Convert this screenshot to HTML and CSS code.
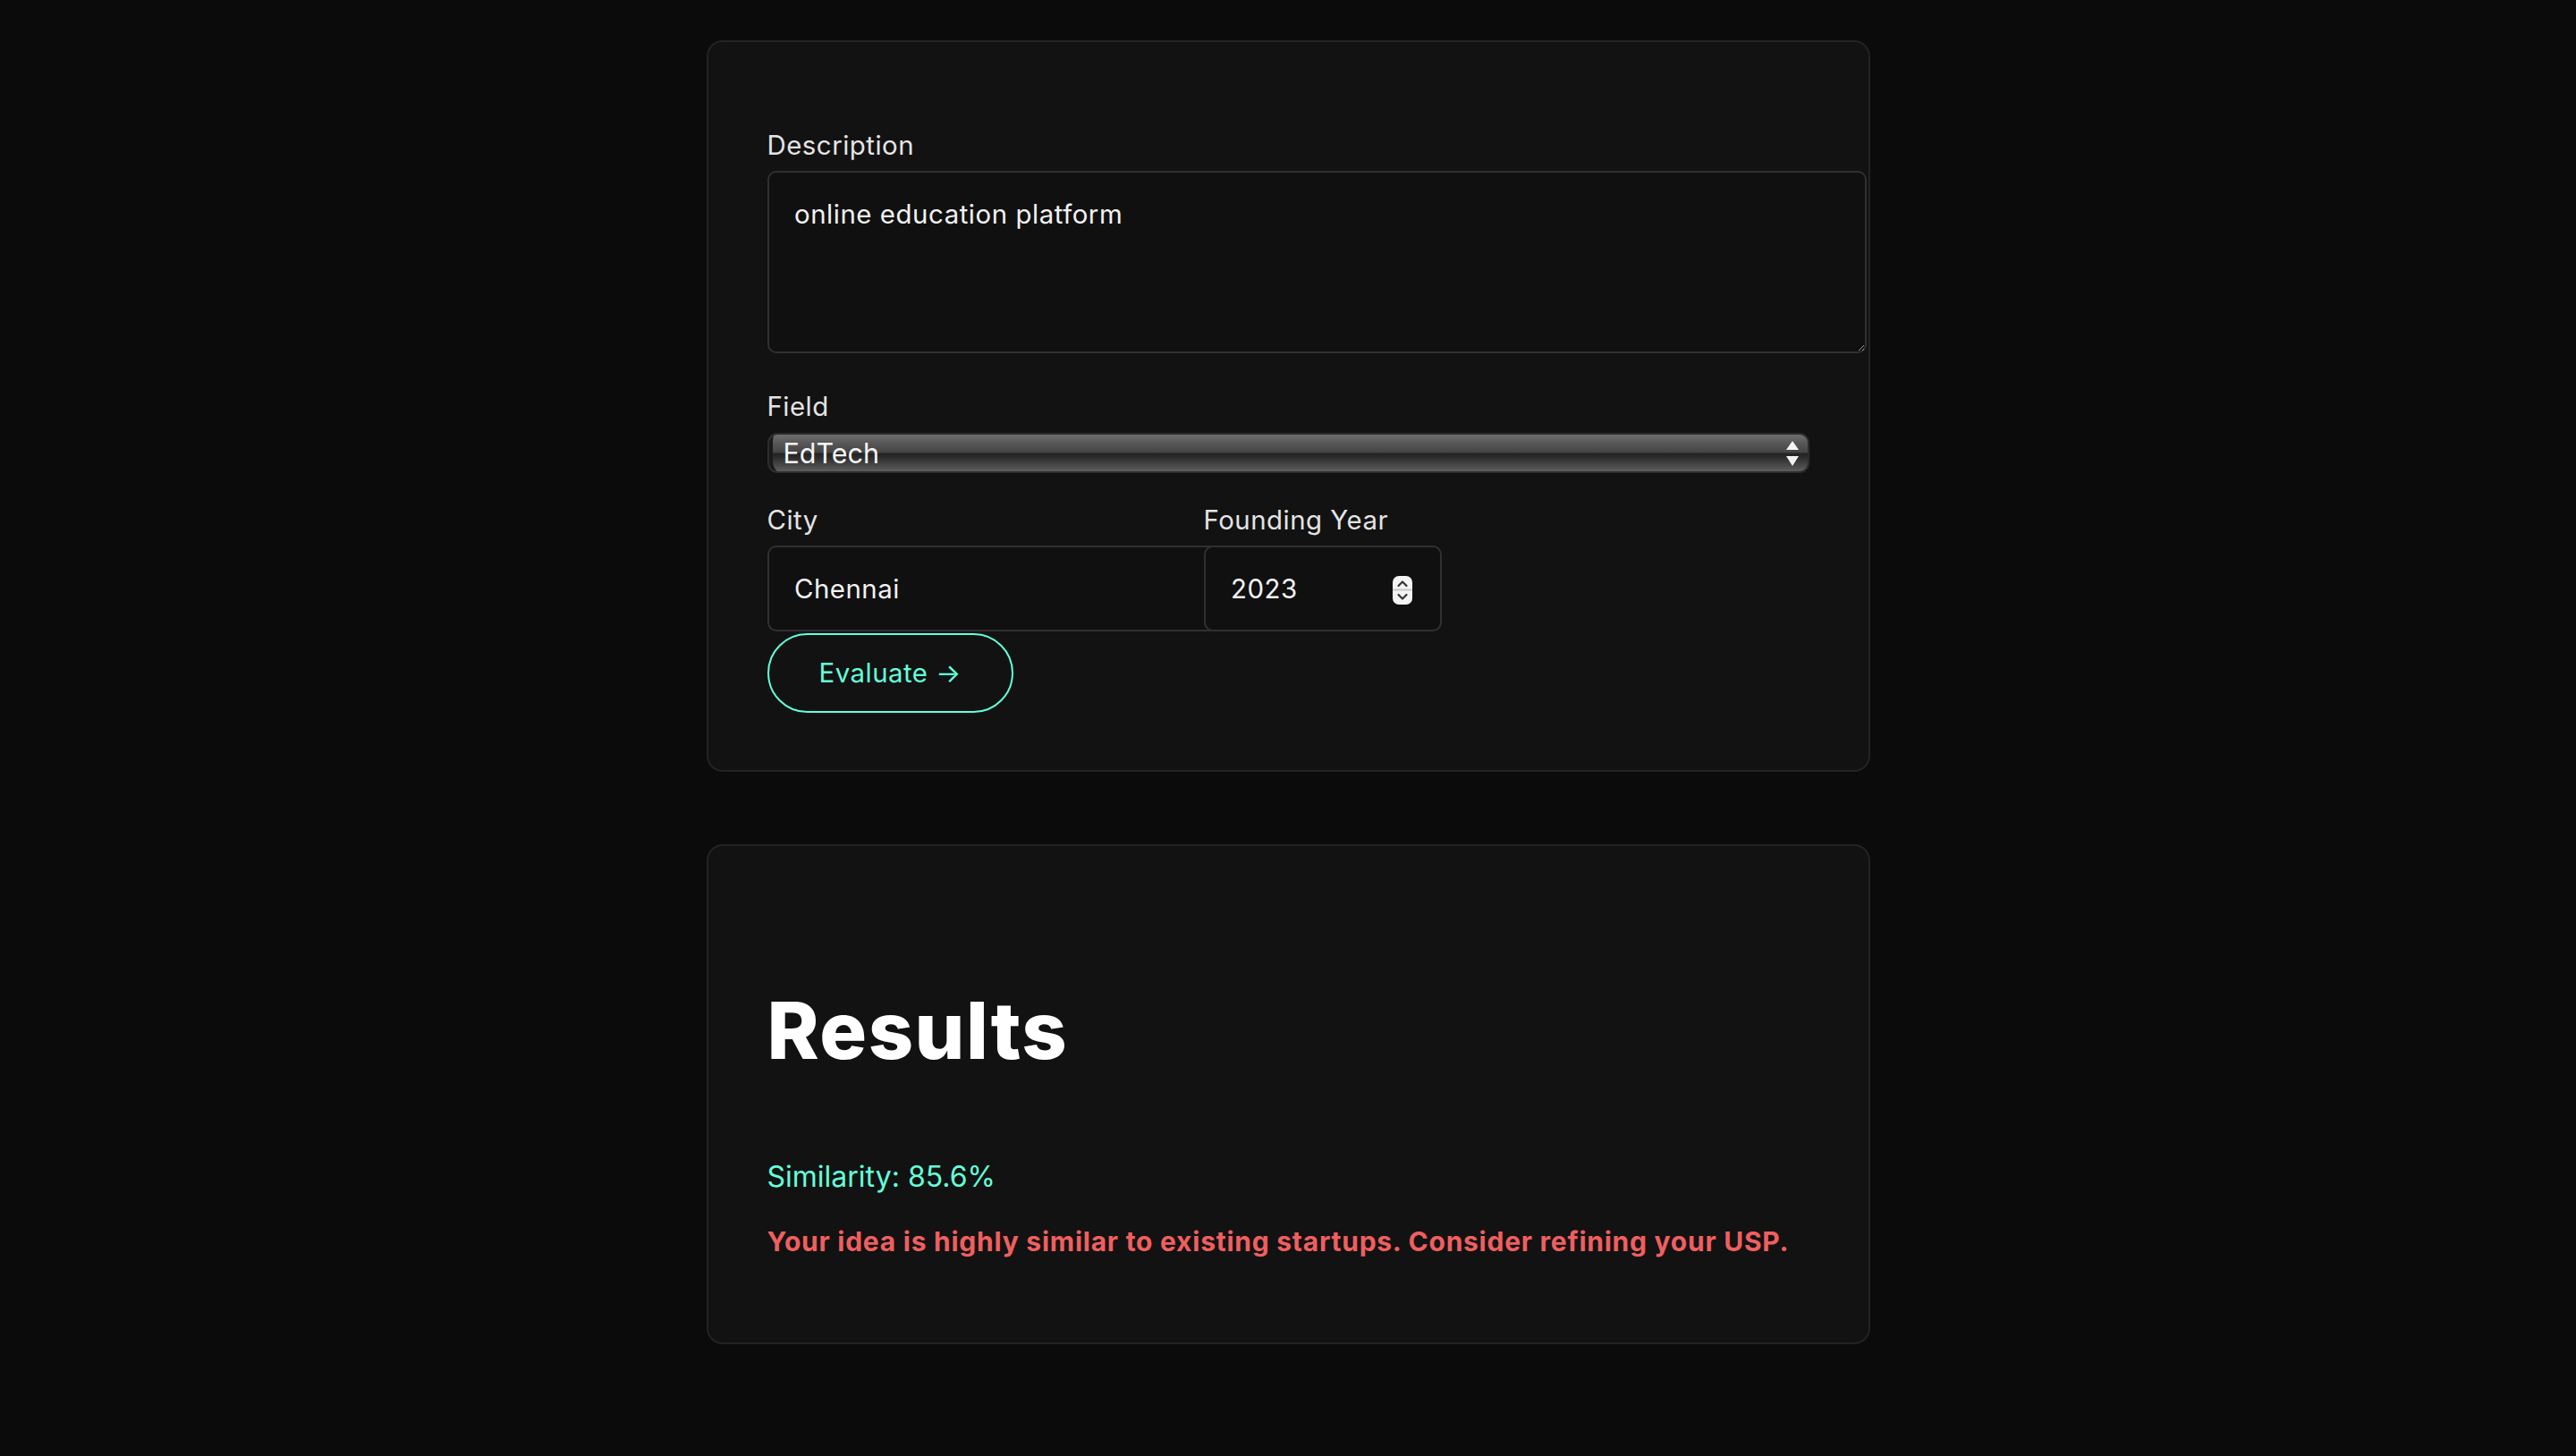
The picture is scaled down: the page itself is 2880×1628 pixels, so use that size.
FILE: index.html
```html
<!DOCTYPE html>
<html lang="en">
<head>
<meta charset="utf-8">
<title>Startup Idea Evaluator</title>
<link rel="stylesheet" href="styles.css">
</head>
<body>
<main class="page">
  <section class="card form-card">
    <form class="form">
      <div class="group group-desc">
        <label class="label" for="desc">Description</label>
        <textarea id="desc" class="textarea">online education platform</textarea>
      </div>
      <div class="group group-field">
        <label class="label" for="field">Field</label>
        <div class="select-wrap">
          <select id="field" class="select"><option>EdTech</option></select>
          <svg class="select-arrows" width="18" height="45" viewBox="0 0 18 45" aria-hidden="true">
            <polygon points="2,19 16,19 9,9" fill="#f4f4f4"/>
            <polygon points="2,26 16,26 9,37" fill="#f4f4f4"/>
          </svg>
        </div>
      </div>
      <div class="row">
        <div class="col col-city">
          <label class="label" for="city">City</label>
          <input id="city" class="input" type="text" value="Chennai">
        </div>
        <div class="col col-year">
          <label class="label" for="year">Founding Year</label>
          <div class="num-wrap">
            <input id="year" class="input input-year" type="number" value="2023">
            <svg class="spinner" width="22" height="32" viewBox="0 0 22 32" aria-hidden="true">
              <rect x="0" y="0" width="22" height="32" rx="7" fill="#f4f4f4"/>
              <line x1="0" y1="15.5" x2="22" y2="15.5" stroke="#c9c9c9" stroke-width="2"/>
              <polyline points="6.5,11 11,6.5 15.5,11" fill="none" stroke="#333" stroke-width="2.2" stroke-linecap="round" stroke-linejoin="round"/>
              <polyline points="6.5,21 11,25.5 15.5,21" fill="none" stroke="#333" stroke-width="2.2" stroke-linecap="round" stroke-linejoin="round"/>
            </svg>
          </div>
        </div>
      </div>
      <button type="button" class="btn">Evaluate →</button>
    </form>
  </section>

  <section class="card results-card">
    <h2 class="results-title">Results</h2>
    <p class="similarity">Similarity: 85.6%</p>
    <p class="warning">Your idea is highly similar to existing startups. Consider refining your USP.</p>
  </section>
</main>
</body>
</html>
```

FILE: styles.css
```css
* {
  box-sizing: border-box;
}

html, body {
  margin: 0;
  background: #0b0b0b;
}

body {
  font-family: Inter, "Noto Sans", "Liberation Sans", sans-serif;
  color: #e8e8e8;
  padding-top: 45px;
  min-height: 1628px;
}

.page {
  display: flex;
  flex-direction: column;
  align-items: center;
  gap: 81px;
}

.card {
  width: 1301px;
  background: #121212;
  border: 2px solid #232323;
  border-radius: 18px;
}

.form-card {
  padding: 98px 66px 64px 66px;
}

.form {
  display: flex;
  flex-direction: column;
  align-items: flex-start;
  margin: 0;
}

.group {
  width: 100%;
}

.label {
  display: block;
  white-space: nowrap;
  font-size: 29.4px;
  line-height: 36px;
  letter-spacing: 0.5px;
  color: #e4e4e4;
  margin-bottom: 10px;
}

.textarea {
  display: block;
  box-sizing: content-box;
  width: calc(100% + 3px);
  height: 143px;
  padding: 28.5px;
  margin: 0 0 42px 0;
  border: 2px solid #303030;
  border-radius: 10px;
  background: #101010;
  color: #f2f2f2;
  font-family: Inter, "Noto Sans", sans-serif;
  font-size: 29.4px;
  line-height: 36px;
  letter-spacing: 0.55px;
  color-scheme: dark;
  outline: none;
}

.group-field .label {
  margin-bottom: 11px;
}

.group-field {
  margin-bottom: 35px;
}

.select-wrap {
  position: relative;
  width: 100%;
  height: 45px;
}

.select {
  -webkit-appearance: none;
  appearance: none;
  display: block;
  width: 100%;
  height: 45px;
  margin: 0;
  padding: 0 40px 0 16px;
  border: 2px solid #2c2c2c;
  border-radius: 11px;
  background: linear-gradient(to bottom, #6f6f6f 0%, #585858 22%, #454545 48%, #232323 52%, #2c2c2c 62%, #4a4a4a 85%, #5e5e5e 100%);
  box-shadow: inset 10px -2px 0 -6px #1a1a1a;
  color: #f4f4f4;
  font-family: Inter, "Noto Sans", sans-serif;
  font-size: 30.5px;
  line-height: 41px;
  outline: none;
}

.select-arrows {
  position: absolute;
  left: 1137px;
  top: 0;
}

.row {
  display: flex;
  align-items: flex-start;
}

.col-city {
  width: 488px;
}

.col-year {
  width: 205px;
}

.input {
  display: block;
  box-sizing: content-box;
  width: 100%;
  height: 35px;
  margin: 0;
  padding: 28.5px;
  border: 2px solid #303030;
  border-radius: 10px;
  background: #101010;
  color: #f2f2f2;
  font-family: Inter, "Noto Sans", sans-serif;
  font-size: 29.4px;
  line-height: 35px;
  letter-spacing: 0.5px;
  outline: none;
}

.num-wrap {
  position: relative;
  width: 100%;
}

.input-year {
  -moz-appearance: textfield;
}

.input-year::-webkit-inner-spin-button,
.input-year::-webkit-outer-spin-button {
  -webkit-appearance: none;
  margin: 0;
}

.spinner {
  position: absolute;
  right: -28px;
  top: 34px;
}

.btn {
  margin-top: 2px;
  padding: 25px 56px;
  border: 2px solid #64ffda;
  border-radius: 60px;
  background: transparent;
  color: #64ffda;
  font-family: Inter, "Noto Sans", sans-serif;
  font-size: 29.4px;
  line-height: 35px;
  letter-spacing: 0.5px;
  cursor: pointer;
}

.results-card {
  padding: 66px 66px 66px 66px;
}

.results-title {
  margin: 87px 0 91px 0;
  font-size: 88px;
  line-height: 106px;
  font-weight: 800;
  letter-spacing: 1.5px;
  color: #ffffff;
}

.similarity {
  margin: 0 0 35px 0;
  font-size: 32px;
  line-height: 39px;
  color: #64ffda;
}

.warning {
  margin: 0 0 29px 0;
  font-size: 30px;
  line-height: 36px;
  font-weight: 700;
  letter-spacing: 0.75px;
  color: #ef5f5f;
}
```
